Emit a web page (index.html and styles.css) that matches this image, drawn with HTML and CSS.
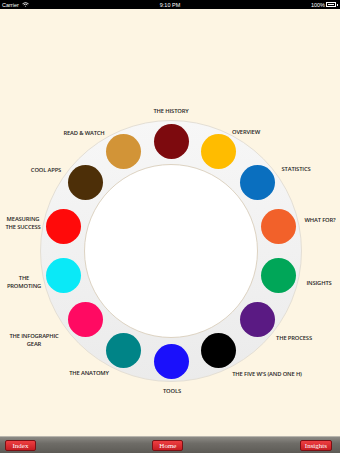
FILE: index.html
```html
<!DOCTYPE html>
<html>
<head>
<meta charset="utf-8">
<link rel="stylesheet" href="styles.css">
</head>
<body>
<div class="screen">
  <div class="status">
    <div class="st-left">Carrier
      <svg class="wifi" width="7" height="5" viewBox="0 0 14 10"><path d="M1 3.5 Q7 -1.5 13 3.5" fill="none" stroke="#fff" stroke-width="1.6"/><path d="M3.3 5.8 Q7 2.6 10.7 5.8" fill="none" stroke="#fff" stroke-width="1.6"/><path d="M5.4 8 L7 9.6 L8.6 8 Q7 6.8 5.4 8Z" fill="#fff"/></svg>
    </div>
    <div class="st-mid">9:10 PM</div>
    <div class="st-right">100% <span class="battery"><span class="battery-fill"></span></span><span class="battery-tip"></span></div>
  </div>
  <div class="main">
    <div class="ring"></div>
    <div class="inner"></div>

    <div class="dot" style="left:171px;top:132px;background:#7d0a0e"></div>
    <div class="dot" style="left:218.7px;top:142.9px;background:#ffbc00"></div>
    <div class="dot" style="left:257px;top:173.4px;background:#0a6fbf"></div>
    <div class="dot" style="left:278.2px;top:217.5px;background:#f2612a"></div>
    <div class="dot" style="left:278.2px;top:266.5px;background:#00a658"></div>
    <div class="dot" style="left:257px;top:310.6px;background:#5a1a83"></div>
    <div class="dot" style="left:218.7px;top:341.1px;background:#000000"></div>
    <div class="dot" style="left:171px;top:352px;background:#1a10fb"></div>
    <div class="dot" style="left:123.3px;top:341.1px;background:#008487"></div>
    <div class="dot" style="left:85px;top:310.6px;background:#ff0a62"></div>
    <div class="dot" style="left:63.8px;top:266.5px;background:#0ae9f7"></div>
    <div class="dot" style="left:63.8px;top:217.5px;background:#ff0a0a"></div>
    <div class="dot" style="left:85px;top:173.4px;background:#4d2f08"></div>
    <div class="dot" style="left:123.3px;top:142.9px;background:#d29437"></div>

    <div class="label" style="left:171px;top:102px">THE HISTORY</div>
    <div class="label" style="left:246px;top:123px">OVERVIEW</div>
    <div class="label" style="left:296px;top:160px">STATISTICS</div>
    <div class="label" style="left:320px;top:211px">WHAT FOR?</div>
    <div class="label" style="left:319px;top:274px">INSIGHTS</div>
    <div class="label" style="left:294px;top:329px">THE PROCESS</div>
    <div class="label" style="left:267px;top:365px">THE FIVE W'S (AND ONE H)</div>
    <div class="label" style="left:172px;top:382px">TOOLS</div>
    <div class="label" style="left:89px;top:364px">THE ANATOMY</div>
    <div class="label" style="left:34px;top:331px">THE INFOGRAPHIC<br>GEAR</div>
    <div class="label" style="left:24px;top:273px">THE<br>PROMOTING</div>
    <div class="label" style="left:23px;top:214px">MEASURING<br>THE SUCCESS</div>
    <div class="label" style="left:46px;top:161px">COOL APPS</div>
    <div class="label" style="left:84px;top:124px">READ &amp; WATCH</div>
  </div>
  <div class="toolbar">
    <button class="btn">Index</button>
    <button class="btn">Home</button>
    <button class="btn">Insights</button>
  </div>
</div>
</body>
</html>
```
FILE: styles.css
```css
* { box-sizing: border-box; }
html, body { margin: 0; padding: 0; }
body {
  width: 340px;
  height: 453px;
  overflow: hidden;
  background: #fdf5e3;
  font-family: "Open Sans", "Liberation Sans", sans-serif;
}
.screen {
  display: flex;
  flex-direction: column;
  height: 453px;
}
.status {
  height: 9px;
  background: #000;
  color: #fff;
  font-family: "Liberation Sans", sans-serif;
  font-size: 5.5px;
  display: flex;
  align-items: center;
  justify-content: space-between;
  padding: 0 2px;
  position: relative;
}
.st-left { display: flex; align-items: center; gap: 3px; }
.st-mid {
  position: absolute;
  left: 50%;
  transform: translateX(-50%);
}
.st-right { display: flex; align-items: center; gap: 1px; }
.battery {
  width: 10px;
  height: 4.5px;
  border: 0.7px solid #fff;
  display: inline-block;
  padding: 0.6px;
}
.battery-fill { display: block; width: 100%; height: 100%; background: #fff; }
.battery-tip { width: 1px; height: 2px; background: #fff; display: inline-block; }
.main {
  flex: 1;
  position: relative;
  background: #fdf5e3;
}
.ring {
  position: absolute;
  left: 40px;
  top: 111px;
  width: 262px;
  height: 262px;
  border-radius: 50%;
  background: linear-gradient(#f7f7f7, #ebebeb);
  border: 1px solid #e4dfd5;
}
.inner {
  position: absolute;
  left: 84px;
  top: 155px;
  width: 174px;
  height: 174px;
  border-radius: 50%;
  background: #fff;
  border: 1px solid #ddd3c2;
}
.dot {
  position: absolute;
  width: 35px;
  height: 35px;
  margin: -17.5px 0 0 -17.5px;
  border-radius: 50%;
}
.label {
  position: absolute;
  transform: translate(-50%, -50%);
  font-size: 5.8px;
  font-weight: 600;
  line-height: 8px;
  letter-spacing: -0.15px;
  color: #1f1f1f;
  text-align: center;
  white-space: nowrap;
}
.toolbar {
  height: 17px;
  background: linear-gradient(#8d8b86, #6e6c67 40%, #5d5b56);
  border-top: 1px solid #b9b6ae;
  display: flex;
  align-items: center;
  justify-content: space-between;
  padding: 0 8px 0 5px;
}
.btn {
  height: 11px;
  min-width: 31px;
  padding: 0 4px;
  border: 0.5px solid #7a1014;
  border-radius: 2px;
  background: linear-gradient(#ee3f42, #c61d22);
  color: #fff;
  font-family: "Liberation Serif", serif;
  font-size: 7px;
  line-height: 10px;
  margin: 0;
}
```
